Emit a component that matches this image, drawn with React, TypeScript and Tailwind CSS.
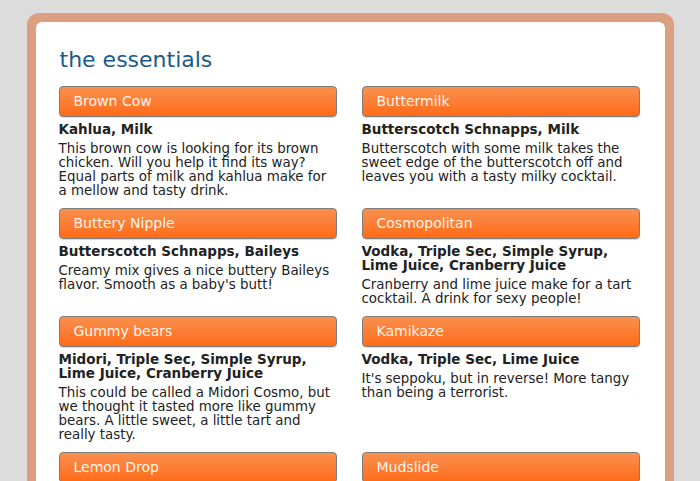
import React from 'react';

type Drink = {
  name: string;
  ingredients: string;
  desc: string;
};

const drinks: Drink[] = [
  {
    name: 'Brown Cow',
    ingredients: 'Kahlua, Milk',
    desc: 'This brown cow is looking for its brown chicken. Will you help it find its way? Equal parts of milk and kahlua make for a mellow and tasty drink.',
  },
  {
    name: 'Buttermilk',
    ingredients: 'Butterscotch Schnapps, Milk',
    desc: 'Butterscotch with some milk takes the sweet edge of the butterscotch off and leaves you with a tasty milky cocktail.',
  },
  {
    name: 'Buttery Nipple',
    ingredients: 'Butterscotch Schnapps, Baileys',
    desc: "Creamy mix gives a nice buttery Baileys flavor. Smooth as a baby's butt!",
  },
  {
    name: 'Cosmopolitan',
    ingredients: 'Vodka, Triple Sec, Simple Syrup, Lime Juice, Cranberry Juice',
    desc: 'Cranberry and lime juice make for a tart cocktail. A drink for sexy people!',
  },
  {
    name: 'Gummy bears',
    ingredients: 'Midori, Triple Sec, Simple Syrup, Lime Juice, Cranberry Juice',
    desc: 'This could be called a Midori Cosmo, but we thought it tasted more like gummy bears. A little sweet, a little tart and really tasty.',
  },
  {
    name: 'Kamikaze',
    ingredients: 'Vodka, Triple Sec, Lime Juice',
    desc: "It's seppoku, but in reverse! More tangy than being a terrorist.",
  },
  {
    name: 'Lemon Drop',
    ingredients: 'Vodka, Lemon Juice, Simple Syrup',
    desc: 'Sweet and sour, like a lemon candy in a glass.',
  },
  {
    name: 'Mudslide',
    ingredients: 'Vodka, Kahlua, Baileys',
    desc: 'A boozy chocolate milkshake for grown ups.',
  },
];

function DrinkCard({ drink }: { drink: Drink }) {
  return (
    <div className="flex flex-col">
      <div className="h-[31px] flex items-center px-[14px] rounded-[4px] border border-[#7d7d7d] bg-gradient-to-b from-[#f8904c] to-[#ff6a12] text-[#fff4ea] text-[14px] shadow-[0_1px_1px_rgba(0,0,0,0.15)]">
        {drink.name}
      </div>
      <div className="mt-[5px] text-[13.5px] leading-[14px] font-bold text-[#222]">
        {drink.ingredients}
      </div>
      <p className="mt-[6px] -mr-[2px] text-[13.4px] leading-[14px] text-[#222]">{drink.desc}</p>
    </div>
  );
}

export default function App() {
  return (
    <div
      className="h-[481px] bg-[#dcdcdc] pt-[13px] overflow-hidden"
      style={{ fontFamily: '"DejaVu Sans", Verdana, sans-serif' }}
    >
      <div className="w-[647px] mx-auto rounded-t-[12px] bg-[#daa081] pt-[9px] px-[9px] pb-[40px]">
        <div className="bg-white rounded-t-[6px] pl-[23px] pr-[25px] pt-[24px] pb-[20px]">
          <h1 className="text-[22px] leading-[28px] text-[#19598a] pl-[1px]">the essentials</h1>
          <div className="mt-[12px] grid grid-cols-2 gap-x-[25px] gap-y-[10px]">
            {drinks.map((d) => (
              <DrinkCard key={d.name} drink={d} />
            ))}
          </div>
        </div>
      </div>
    </div>
  );
}
